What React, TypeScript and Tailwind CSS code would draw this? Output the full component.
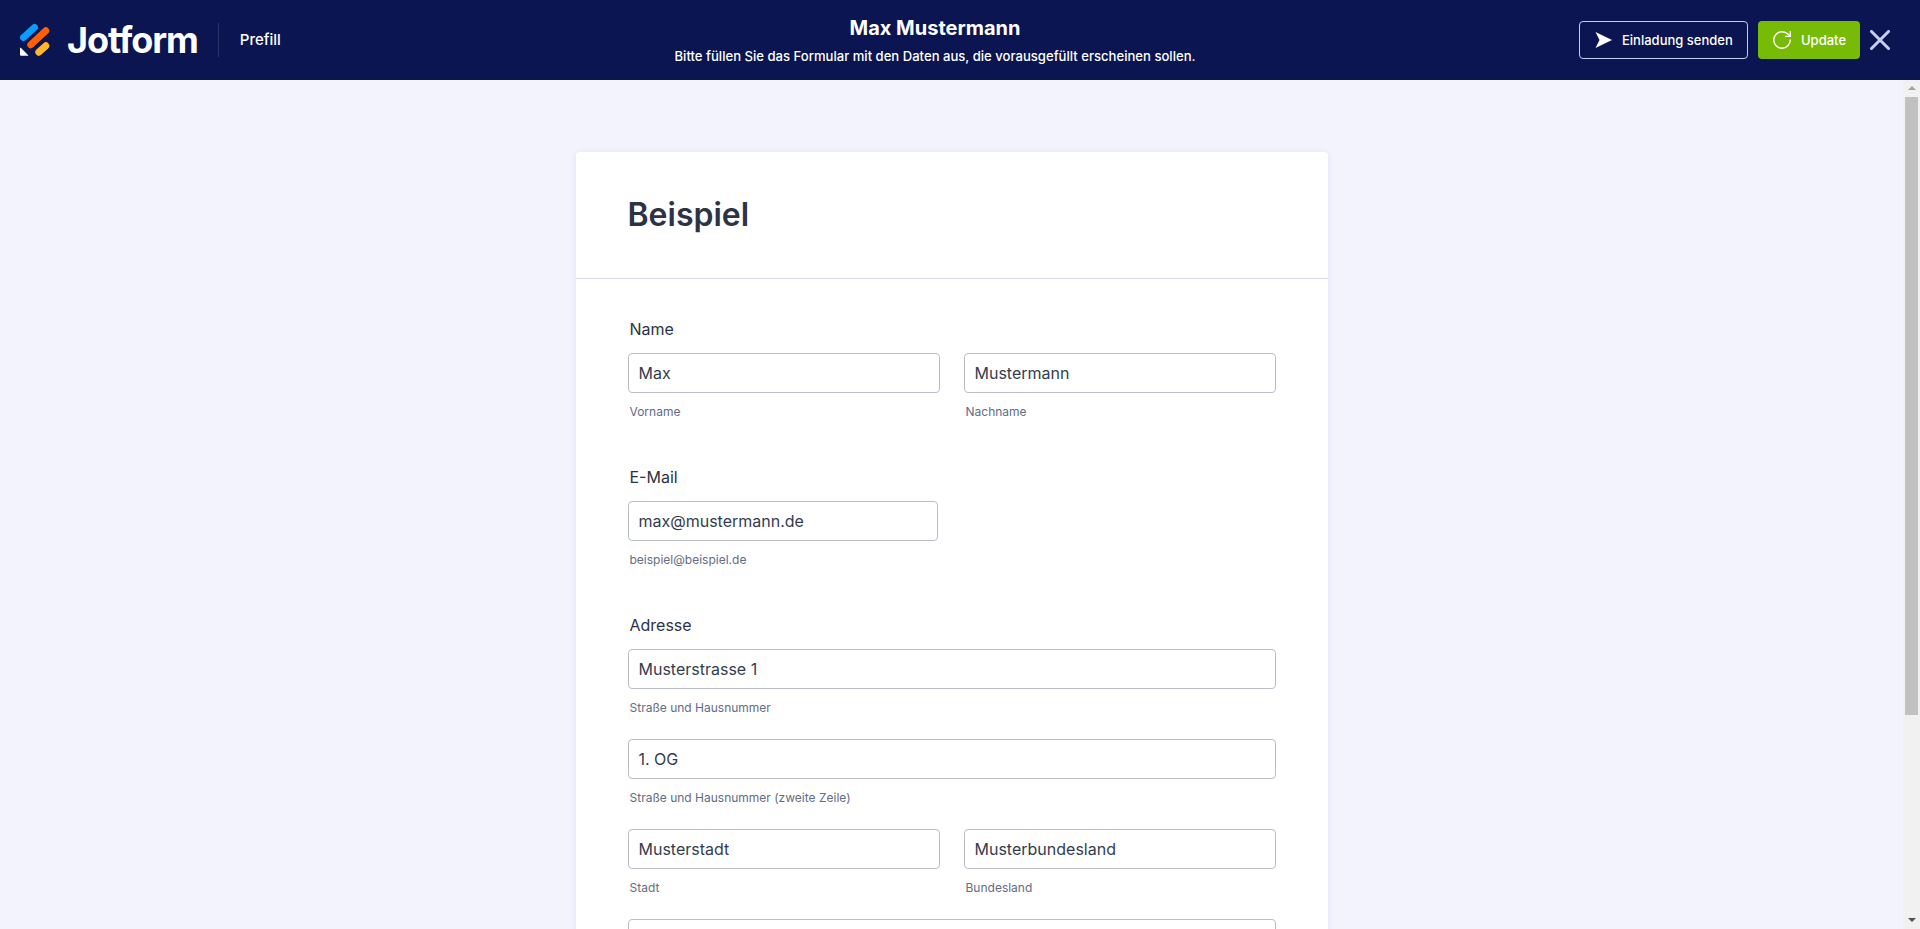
import { RotateCw } from 'lucide-react'

function Logo() {
  return (
    <svg width="32" height="36" viewBox="0 0 32 36" className="shrink-0" fill="none">
      <path d="M14.5 5.5 L3.5 15.5" stroke="#0a9cff" strokeWidth="7" strokeLinecap="round" />
      <path d="M25.8 8.8 L10.8 22.8" stroke="#ff6100" strokeWidth="7" strokeLinecap="round" />
      <path d="M25.8 23.8 L18.8 30.2" stroke="#ffb629" strokeWidth="7" strokeLinecap="round" />
      <path d="M0 26 C0 25.6 0.5 25.5 1 26 L8 33 C8.5 33.6 8.2 33.8 7.8 33.8 L1.5 33.8 C0.5 33.8 0 33.3 0 32.3 Z" fill="#ffffff" />
    </svg>
  )
}

function Field({ value, sub, className = '' }: { value: string; sub: string; className?: string }) {
  return (
    <div className={className}>
      <div className="h-10 rounded border border-[#b8bdc9] bg-white pl-[10px] text-base leading-[38px] text-[#343c50]">
        {value}
      </div>
      <div className="mt-[9px] h-5 pl-[2px] text-xs leading-5 text-[#626c85]">{sub}</div>
    </div>
  )
}

export default function App() {
  return (
    <div className="flex h-[929px] flex-col overflow-hidden bg-[#f3f3fe] font-['Inter',sans-serif]">
      {/* Header */}
      <header className="flex h-20 shrink-0 items-center bg-[#0a1551] pl-5 pr-[30px] text-white">
        <div className="flex w-[271px] shrink-0 items-center whitespace-nowrap">
          <Logo />
          <span className="ml-[15px] text-[36px] font-bold leading-none tracking-[-1.1px]">Jotform</span>
          <div className="ml-5 h-[34px] w-px shrink-0 bg-[#2a3466]" />
          <span className="ml-[21px] text-[15px] font-medium">Prefill</span>
        </div>
        <div className="flex-1 pt-[2px] text-center">
          <div className="text-xl font-bold leading-6">Max Mustermann</div>
          <div className="mt-[6px] text-[13.1px] font-medium leading-5">
            Bitte füllen Sie das Formular mit den Daten aus, die vorausgefüllt erscheinen sollen.
          </div>
        </div>
        <button className="flex h-[38px] w-[169px] items-center gap-[10px] rounded border border-[#c8ceed] pl-[15px] text-[13px] font-medium">
          <svg width="17" height="16" viewBox="0 0 17 16" fill="#ffffff">
            <path d="M0.5 0 L17 8 L0.5 16 L4.5 8 Z" />
          </svg>
          <span className="pt-px">Einladung senden</span>
        </button>
        <button className="ml-[10px] flex h-[38px] w-[102px] items-center gap-2 rounded bg-[#78bb07] pl-[13px] text-[13px] font-medium">
          <RotateCw size={22} strokeWidth={1.5} />
          <span className="pt-px">Update</span>
        </button>
        <svg width="20" height="20" viewBox="0 0 20 20" className="ml-[10px] shrink-0" fill="none">
          <path d="M1.5 1.5 L18.5 18.5 M18.5 1.5 L1.5 18.5" stroke="#c8ceed" strokeWidth="3" strokeLinecap="round" />
        </svg>
      </header>

      <div className="flex min-h-0 flex-1">
        {/* Form */}
        <main className="min-w-0 flex-1 overflow-hidden pt-[72px]">
          <div className="mx-auto w-[752px] rounded-t bg-white shadow-[0_1px_6px_rgba(87,114,174,0.12)]">
            <div className="flex h-[127px] items-center border-b border-[#d8dae5] pl-[52px]">
              <h1 className="text-[32px] font-semibold text-[#2c3345]">Beispiel</h1>
            </div>
            <div className="px-[52px] pt-10">
              <div className="h-5 pl-[2px] text-base leading-5 text-[#2c3345]">Name</div>
              <div className="mt-[14px] flex gap-6">
                <Field value="Max" sub="Vorname" className="flex-1" />
                <Field value="Mustermann" sub="Nachname" className="flex-1" />
              </div>

              <div className="mt-[45px] h-5 pl-[2px] text-base leading-5 text-[#2c3345]">E-Mail</div>
              <Field value="max@mustermann.de" sub="beispiel@beispiel.de" className="mt-[14px] w-[310px]" />

              <div className="mt-[45px] h-5 pl-[2px] text-base leading-5 text-[#2c3345]">Adresse</div>
              <Field value="Musterstrasse 1" sub="Straße und Hausnummer" className="mt-[14px]" />
              <Field value="1. OG" sub="Straße und Hausnummer (zweite Zeile)" className="mt-[21px]" />
              <div className="mt-[21px] flex gap-6">
                <Field value="Musterstadt" sub="Stadt" className="flex-1" />
                <Field value="Musterbundesland" sub="Bundesland" className="flex-1" />
              </div>
              <Field value="" sub="" className="mt-[21px]" />
            </div>
          </div>
        </main>

        {/* Scrollbar */}
        <div className="flex w-[17px] shrink-0 flex-col items-center bg-[#f1f1f1]">
          <div className="mt-[6px] h-0 w-0 border-x-[4px] border-b-[4px] border-x-transparent border-b-[#a3a3a3]" />
          <div className="mt-[7px] h-[618px] w-[13px] bg-[#c1c1c1]" />
          <div className="mt-[203px] h-0 w-0 border-x-[4px] border-t-[4px] border-x-transparent border-t-[#505050]" />
        </div>
      </div>
    </div>
  )
}
